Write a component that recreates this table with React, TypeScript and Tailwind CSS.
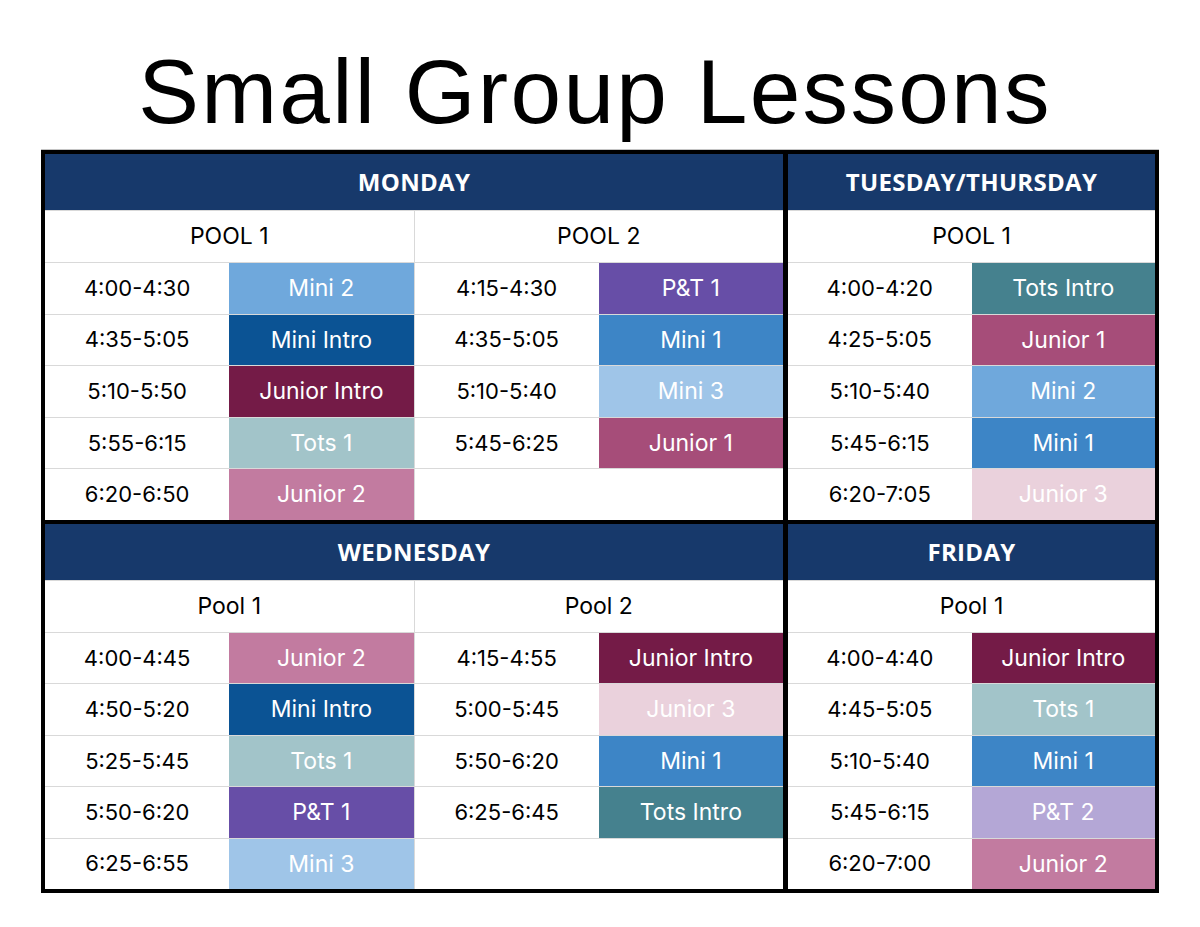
import React from "react";

type Slot = { time: string; name: string } | null;

interface Pool {
  label: string;
  slots: Slot[];
}

interface Section {
  day: string;
  pools: Pool[];
}

const colors: Record<string, string> = {
  "Mini 2": "bg-[#6fa8dc]",
  "Mini Intro": "bg-[#0b5394]",
  "Junior Intro": "bg-[#741b47]",
  "Tots 1": "bg-[#a2c4c9]",
  "Junior 2": "bg-[#c27ba0]",
  "P&T 1": "bg-[#674ea7]",
  "P&T 2": "bg-[#b4a7d6]",
  "Mini 1": "bg-[#3d85c6]",
  "Mini 3": "bg-[#9fc5e8]",
  "Junior 1": "bg-[#a64d79]",
  "Junior 3": "bg-[#ead1dc]",
  "Tots Intro": "bg-[#45818e]",
};

const s = (time: string, name: string): Slot => ({ time, name });

const sections: Section[] = [
  {
    day: "MONDAY",
    pools: [
      {
        label: "POOL 1",
        slots: [
          s("4:00-4:30", "Mini 2"),
          s("4:35-5:05", "Mini Intro"),
          s("5:10-5:50", "Junior Intro"),
          s("5:55-6:15", "Tots 1"),
          s("6:20-6:50", "Junior 2"),
        ],
      },
      {
        label: "POOL 2",
        slots: [
          s("4:15-4:30", "P&T 1"),
          s("4:35-5:05", "Mini 1"),
          s("5:10-5:40", "Mini 3"),
          s("5:45-6:25", "Junior 1"),
          null,
        ],
      },
    ],
  },
  {
    day: "TUESDAY/THURSDAY",
    pools: [
      {
        label: "POOL 1",
        slots: [
          s("4:00-4:20", "Tots Intro"),
          s("4:25-5:05", "Junior 1"),
          s("5:10-5:40", "Mini 2"),
          s("5:45-6:15", "Mini 1"),
          s("6:20-7:05", "Junior 3"),
        ],
      },
    ],
  },
  {
    day: "WEDNESDAY",
    pools: [
      {
        label: "Pool 1",
        slots: [
          s("4:00-4:45", "Junior 2"),
          s("4:50-5:20", "Mini Intro"),
          s("5:25-5:45", "Tots 1"),
          s("5:50-6:20", "P&T 1"),
          s("6:25-6:55", "Mini 3"),
        ],
      },
      {
        label: "Pool 2",
        slots: [
          s("4:15-4:55", "Junior Intro"),
          s("5:00-5:45", "Junior 3"),
          s("5:50-6:20", "Mini 1"),
          s("6:25-6:45", "Tots Intro"),
          null,
        ],
      },
    ],
  },
  {
    day: "FRIDAY",
    pools: [
      {
        label: "Pool 1",
        slots: [
          s("4:00-4:40", "Junior Intro"),
          s("4:45-5:05", "Tots 1"),
          s("5:10-5:40", "Mini 1"),
          s("5:45-6:15", "P&T 2"),
          s("6:20-7:00", "Junior 2"),
        ],
      },
    ],
  },
];

const PoolColumn = ({ pool, last }: { pool: Pool; last: boolean }) => (
  <div
    className={`flex-1 flex flex-col ${last ? "" : "border-r border-[#d9d9d9]"}`}
  >
    <div className="h-[52px] shrink-0 flex items-center justify-center border-t border-[#d9d9d9] text-[23px] text-black">
      {pool.label}
    </div>
    {pool.slots.map((slot, i) => (
      <div key={i} className="flex-1 flex border-t border-[#d9d9d9]">
        {slot ? (
          <>
            <div className="flex-1 flex items-center justify-center text-[22px] text-black">
              {slot.time}
            </div>
            <div
              className={`flex-1 flex items-center justify-center text-[23px] text-white ${colors[slot.name]}`}
            >
              {slot.name}
            </div>
          </>
        ) : (
          <div className="flex-1" />
        )}
      </div>
    ))}
  </div>
);

const DayBlock = ({ section }: { section: Section }) => (
  <div className="bg-white flex flex-col">
    <div className="h-[56px] shrink-0 bg-[#17396b] flex items-center justify-center font-['Open_Sans',sans-serif] font-bold text-[24px] tracking-[0.3px] text-white">
      {section.day}
    </div>
    <div className="flex-1 flex">
      {section.pools.map((pool, i) => (
        <PoolColumn key={i} pool={pool} last={i === section.pools.length - 1} />
      ))}
    </div>
  </div>
);

export default function App() {
  return (
    <div className="w-[1200px] h-[927px] bg-white font-['Inter',sans-serif]">
      <div className="h-[149px] pt-[46px] pr-[10px] text-center">
        <h1 className="font-['Liberation_Sans',sans-serif] text-[91px] leading-none tracking-[2.3px] text-black">
          Small Group Lessons
        </h1>
      </div>
      <div className="mx-[41px] border-t border-[#c4c4c4]">
        <div className="grid grid-cols-[738px_367px] grid-rows-[366px_365px] gap-x-[5px] gap-y-[4px] bg-black border-4 border-black">
          {sections.map((section) => (
            <DayBlock key={section.day} section={section} />
          ))}
        </div>
      </div>
    </div>
  );
}
